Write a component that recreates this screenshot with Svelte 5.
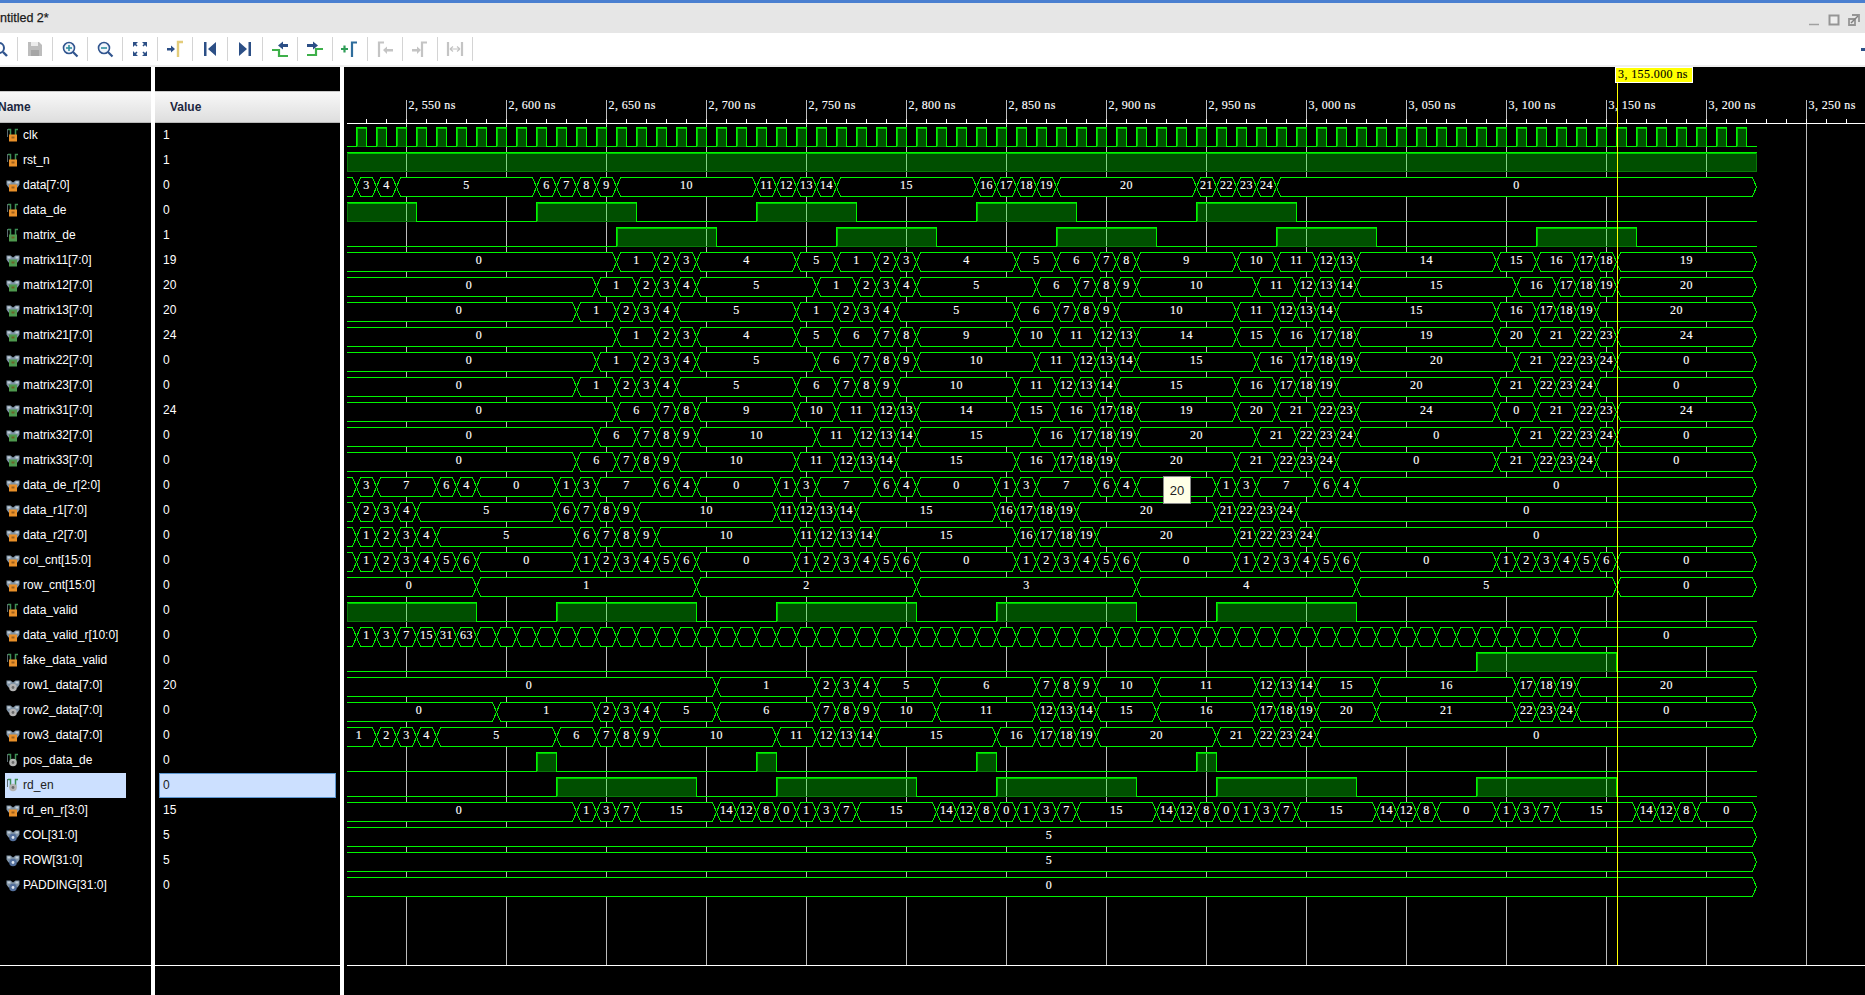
<script>
  // waveform geometry, all in page pixels (the svg viewBox starts at the panel's corner)
  const X = (k) => 356.5 + 20 * k;
  const rowTop = (i) => 127.5 + 25 * i;
  const rowBot = (i) => 146.5 + 25 * i;
  const END = 70;
  const LABEL_START = 341.4;

  const bus = (spec) => {
    const parts = spec.trim().split(/\s+/).map((p) => {
      const [k, v] = p.split(':');
      return { k: +k, v };
    });
    return parts.map((p, i) => ({
      x0: X(p.k),
      x1: X(i + 1 < parts.length ? parts[i + 1].k : END),
      v: p.v
    }));
  };

  const clkHigh = Array.from({ length: 70 }, (_, k) => [k, k + 0.5]);

  let validR = '-1: 0:1 1:3 2:7 3:15 4:31 5:63';
  for (let k = 6; k < 61; k++) validR += ` ${k}:`;
  validR += ' 61:0';

  const signals = [
    { name: 'clk', value: '1', icon: 'bit', badge: 'orange', high: clkHigh },
    { name: 'rst_n', value: '1', icon: 'bit', badge: 'orange', high: [[-1, 70]] },
    { name: 'data[7:0]', value: '0', icon: 'bus', badge: 'orange', bus: '-1: 0:3 1:4 2:5 9:6 10:7 11:8 12:9 13:10 20:11 21:12 22:13 23:14 24:15 31:16 32:17 33:18 34:19 35:20 42:21 43:22 44:23 45:24 46:0' },
    { name: 'data_de', value: '0', icon: 'bit', badge: 'orange', high: [[-1, 3], [9, 14], [20, 25], [31, 36], [42, 47]] },
    { name: 'matrix_de', value: '1', icon: 'bit', badge: 'green', high: [[13, 18], [24, 29], [35, 40], [46, 51], [59, 64]] },
    { name: 'matrix11[7:0]', value: '19', icon: 'bus', badge: 'green', bus: '-5:0 13:1 15:2 16:3 17:4 22:5 24:1 26:2 27:3 28:4 33:5 35:6 37:7 38:8 39:9 44:10 46:11 48:12 49:13 50:14 57:15 59:16 61:17 62:18 63:19' },
    { name: 'matrix12[7:0]', value: '20', icon: 'bus', badge: 'green', bus: '-5:0 12:1 14:2 15:3 16:4 17:5 23:1 25:2 26:3 27:4 28:5 34:6 36:7 37:8 38:9 39:10 45:11 47:12 48:13 49:14 50:15 58:16 60:17 61:18 62:19 63:20' },
    { name: 'matrix13[7:0]', value: '20', icon: 'bus', badge: 'green', bus: '-5:0 11:1 13:2 14:3 15:4 16:5 22:1 24:2 25:3 26:4 27:5 33:6 35:7 36:8 37:9 38:10 44:11 46:12 47:13 48:14 49:15 57:16 59:17 60:18 61:19 62:20' },
    { name: 'matrix21[7:0]', value: '24', icon: 'bus', badge: 'green', bus: '-5:0 13:1 15:2 16:3 17:4 22:5 24:6 26:7 27:8 28:9 33:10 35:11 37:12 38:13 39:14 44:15 46:16 48:17 49:18 50:19 57:20 59:21 61:22 62:23 63:24' },
    { name: 'matrix22[7:0]', value: '0', icon: 'bus', badge: 'green', bus: '-5:0 12:1 14:2 15:3 16:4 17:5 23:6 25:7 26:8 27:9 28:10 34:11 36:12 37:13 38:14 39:15 45:16 47:17 48:18 49:19 50:20 58:21 60:22 61:23 62:24 63:0' },
    { name: 'matrix23[7:0]', value: '0', icon: 'bus', badge: 'green', bus: '-5:0 11:1 13:2 14:3 15:4 16:5 22:6 24:7 25:8 26:9 27:10 33:11 35:12 36:13 37:14 38:15 44:16 46:17 47:18 48:19 49:20 57:21 59:22 60:23 61:24 62:0' },
    { name: 'matrix31[7:0]', value: '24', icon: 'bus', badge: 'green', bus: '-5:0 13:6 15:7 16:8 17:9 22:10 24:11 26:12 27:13 28:14 33:15 35:16 37:17 38:18 39:19 44:20 46:21 48:22 49:23 50:24 57:0 59:21 61:22 62:23 63:24' },
    { name: 'matrix32[7:0]', value: '0', icon: 'bus', badge: 'green', bus: '-5:0 12:6 14:7 15:8 16:9 17:10 23:11 25:12 26:13 27:14 28:15 34:16 36:17 37:18 38:19 39:20 45:21 47:22 48:23 49:24 50:0 58:21 60:22 61:23 62:24 63:0' },
    { name: 'matrix33[7:0]', value: '0', icon: 'bus', badge: 'green', bus: '-5:0 11:6 13:7 14:8 15:9 16:10 22:11 24:12 25:13 26:14 27:15 33:16 35:17 36:18 37:19 38:20 44:21 46:22 47:23 48:24 49:0 57:21 59:22 60:23 61:24 62:0' },
    { name: 'data_de_r[2:0]', value: '0', icon: 'bus', badge: 'orange', bus: '-1: 0:3 1:7 4:6 5:4 6:0 10:1 11:3 12:7 15:6 16:4 17:0 21:1 22:3 23:7 26:6 27:4 28:0 32:1 33:3 34:7 37:6 38:4 39:0 43:1 44:3 45:7 48:6 49:4 50:0' },
    { name: 'data_r1[7:0]', value: '0', icon: 'bus', badge: 'orange', bus: '-1: 0:2 1:3 2:4 3:5 10:6 11:7 12:8 13:9 14:10 21:11 22:12 23:13 24:14 25:15 32:16 33:17 34:18 35:19 36:20 43:21 44:22 45:23 46:24 47:0' },
    { name: 'data_r2[7:0]', value: '0', icon: 'bus', badge: 'orange', bus: '-1: 0:1 1:2 2:3 3:4 4:5 11:6 12:7 13:8 14:9 15:10 22:11 23:12 24:13 25:14 26:15 33:16 34:17 35:18 36:19 37:20 44:21 45:22 46:23 47:24 48:0' },
    { name: 'col_cnt[15:0]', value: '0', icon: 'bus', badge: 'orange', bus: '-1: 0:1 1:2 2:3 3:4 4:5 5:6 6:0 11:1 12:2 13:3 14:4 15:5 16:6 17:0 22:1 23:2 24:3 25:4 26:5 27:6 28:0 33:1 34:2 35:3 36:4 37:5 38:6 39:0 44:1 45:2 46:3 47:4 48:5 49:6 50:0 57:1 58:2 59:3 60:4 61:5 62:6 63:0' },
    { name: 'row_cnt[15:0]', value: '0', icon: 'bus', badge: 'orange', bus: '-5:0 6:1 17:2 28:3 39:4 50:5 63:0' },
    { name: 'data_valid', value: '0', icon: 'bit', badge: 'orange', high: [[-1, 6], [10, 17], [21, 28], [32, 39], [43, 50]] },
    { name: 'data_valid_r[10:0]', value: '0', icon: 'bus', badge: 'orange', bus: validR },
    { name: 'fake_data_valid', value: '0', icon: 'bit', badge: 'orange', high: [[56, 63]] },
    { name: 'row1_data[7:0]', value: '20', icon: 'bus', badge: 'gray', bus: '-5:0 18:1 23:2 24:3 25:4 26:5 29:6 34:7 35:8 36:9 37:10 40:11 45:12 46:13 47:14 48:15 51:16 58:17 59:18 60:19 61:20' },
    { name: 'row2_data[7:0]', value: '0', icon: 'bus', badge: 'gray', bus: '-5:0 7:1 12:2 13:3 14:4 15:5 18:6 23:7 24:8 25:9 26:10 29:11 34:12 35:13 36:14 37:15 40:16 45:17 46:18 47:19 48:20 51:21 58:22 59:23 60:24 61:0' },
    { name: 'row3_data[7:0]', value: '0', icon: 'bus', badge: 'orange', bus: '-5:1 1:2 2:3 3:4 4:5 10:6 12:7 13:8 14:9 15:10 21:11 23:12 24:13 25:14 26:15 32:16 34:17 35:18 36:19 37:20 43:21 45:22 46:23 47:24 48:0' },
    { name: 'pos_data_de', value: '0', icon: 'bit', badge: 'gray', high: [[9, 10], [20, 21], [31, 32], [42, 43]] },
    { name: 'rd_en', value: '0', icon: 'bit', badge: 'gray', selected: true, high: [[10, 17], [21, 28], [32, 39], [43, 50], [56, 63]] },
    { name: 'rd_en_r[3:0]', value: '15', icon: 'bus', badge: 'orange', bus: '-5:0 11:1 12:3 13:7 14:15 18:14 19:12 20:8 21:0 22:1 23:3 24:7 25:15 29:14 30:12 31:8 32:0 33:1 34:3 35:7 36:15 40:14 41:12 42:8 43:0 44:1 45:3 46:7 47:15 51:14 52:12 53:8 54:0 57:1 58:3 59:7 60:15 64:14 65:12 66:8 67:0' },
    { name: 'COL[31:0]', value: '5', icon: 'bus', badge: 'blue', bus: '-5:5' },
    { name: 'ROW[31:0]', value: '5', icon: 'bus', badge: 'blue', bus: '-5:5' },
    { name: 'PADDING[31:0]', value: '0', icon: 'bus', badge: 'blue', bus: '-5:0' }
  ];

  const badgeColors = { orange: '#e8902a', green: '#4f9a4f', gray: '#b4b4b4', blue: '#54709c' };

  const rows = signals.map((s, i) => {
    const top = rowTop(i);
    const bot = rowBot(i);
    const mid = (top + bot) / 2;
    if (s.bus) {
      const segs = bus(s.bus).map((seg) => ({
        v: seg.v,
        points: [
          [seg.x0 + 4, top], [seg.x1 - 4, top], [seg.x1, mid],
          [seg.x1 - 4, bot], [seg.x0 + 4, bot], [seg.x0, mid]
        ].join(' '),
        cx: (Math.max(seg.x0, LABEL_START) + seg.x1) / 2
      }));
      return { ...s, segs, baseline: top + 11 };
    }
    let d = `M 346.5 ${bot}`;
    let edge = '';
    let openEnd = false;
    for (const [a, b] of s.high) {
      if (a < 0) {
        d = `M 346.5 ${top}`;
        edge += `M 348 ${top + 1} L ${X(b) - 1} ${top + 1} `;
      } else {
        d += ` L ${X(a)} ${bot} L ${X(a)} ${top}`;
        edge += `M ${X(a) + 1} ${bot - 1} L ${X(a) + 1} ${top + 1} L ${X(b) - 1} ${top + 1} `;
      }
      d += ` L ${X(b)} ${top}`;
      if (b >= END) openEnd = true;
      else d += ` L ${X(b)} ${bot}`;
    }
    if (!openEnd) d += ` L ${X(END)} ${bot}`;
    const blocks = s.high.map(([a, b]) => {
      const x = Math.max(X(a), 347.5);
      return { x, w: X(b) - x, y: top, h: bot - top };
    });
    return { ...s, d, edge, blocks };
  });

  const majors = Array.from({ length: 15 }, (_, n) => {
    const t = 2550 + 50 * n;
    return { x: 406.5 + 100 * n, label: `${Math.floor(t / 1000)}, ${String(t % 1000).padStart(3, '0')} ns` };
  });
  const ticks = Array.from({ length: 76 }, (_, n) => 366.5 + 20 * n);

  const tools = ['search', 'save', 'zoomin', 'zoomout', 'fit', 'goto', 'first', 'last', 'prevedge', 'nextedge', 'addmark', 'prevmark', 'nextmark', 'swap'];
</script>

{#snippet sigIcon(kind, badge)}
  <svg class="sig-icon" viewBox="0 0 14 14" width="14" height="14">
    {#if kind === 'bit'}
      <path d="M2 1.500h2.500v8M12 1.500H9.500v8" fill="none" stroke="#3d8f55" stroke-width="1.500" />
      <path d="M1.500 1v8" stroke="#5a6a70" stroke-width="1" />
    {:else}
      <path d="M0.500 2.500h4l2.500 2 2.500-2h4v4l-2 3h-9l-2-3z" fill="#7f93a6" />
      <path d="M1.500 3.500h3v2h-3zM9.500 3.500h3v2h-3z" fill="#c4d0da" />
    {/if}
    {#if badge === 'orange' || badge === 'green'}
      <path d="M3 6.500h8v7H3z" fill={badgeColors[badge]} />
      <path d="M5.500 8.500h3v2h-3z" fill="#7a4a18" opacity="0.7" />
    {:else}
      <circle cx="7" cy="9.500" r="3.800" fill={badgeColors[badge]} />
      <circle cx="7" cy="9.500" r="1.400" fill={badge === 'blue' ? '#dfe7f2' : '#6a6a6a'} />
    {/if}
  </svg>
{/snippet}

{#snippet toolIcon(t)}
  <svg viewBox="0 0 18 18" width="18" height="18">
    {#if t === 'search'}
      <circle cx="8" cy="8" r="5" fill="none" stroke="#31558f" stroke-width="2" />
      <path d="M12 12l4 4" stroke="#31558f" stroke-width="2.400" />
    {:else if t === 'save'}
      <path d="M2 2h11l3 3v11H2z" fill="#bdbdbd" />
      <path d="M5 2h7v4H5z" fill="#ececec" />
      <path d="M5 10h8v6H5z" fill="#a6a6a6" />
    {:else if t === 'zoomin' || t === 'zoomout'}
      <circle cx="8" cy="8" r="5.500" fill="#f1f5fb" stroke="#31558f" stroke-width="1.600" />
      <path d="M12 12l4.500 4.500" stroke="#31558f" stroke-width="2.200" />
      <path d="M5 8h6" stroke="#2f8f9f" stroke-width="1.600" />
      {#if t === 'zoomin'}<path d="M8 5v6" stroke="#2f8f9f" stroke-width="1.600" />{/if}
    {:else if t === 'fit'}
      <path d="M2 2h5l-5 5zM16 2h-5l5 5zM2 16h5l-5-5zM16 16h-5l5-5z" fill="#2c4f86" />
      <path d="M3 3l3 3M15 3l-3 3M3 15l3-3M15 15l-3-3" stroke="#2c4f86" stroke-width="1.600" />
    {:else if t === 'goto'}
      <path d="M1 8h4V5.500l4 3.500-4 3.500V10.500H1z" fill="#2c4f86" />
      <path d="M12 17V2h5" fill="none" stroke="#e3cc7a" stroke-width="2.400" />
    {:else if t === 'first'}
      <path d="M3 2h2.500v14H3zM15 2v14L7 9z" fill="#2c4f86" />
    {:else if t === 'last'}
      <path d="M15 2h-2.500v14H15zM3 2v14l8-7z" fill="#2c4f86" />
    {:else if t === 'prevedge'}
      <path d="M1 10h7v6h9" fill="none" stroke="#3eb04a" stroke-width="2.200" />
      <path d="M7 5.500l5-4v2.500h5v3h-5v2.500z" fill="#2c4f86" />
    {:else if t === 'nextedge'}
      <path d="M1 15h9v-6h7" fill="none" stroke="#3eb04a" stroke-width="2.200" />
      <path d="M12 5.500l-5-4v2.500H1v3h6v2.500z" fill="#2c4f86" />
    {:else if t === 'addmark'}
      <path d="M0 9h7M3.500 5.500v7" stroke="#2f9d57" stroke-width="2.200" />
      <path d="M11 17V2.500h5" fill="none" stroke="#2f6d9c" stroke-width="2.200" />
    {:else if t === 'prevmark'}
      <path d="M3 17V2.500h5" fill="none" stroke="#c4c4c4" stroke-width="2.200" />
      <path d="M7 10l4-3.500V9h6v2.500h-6V14z" fill="#c4c4c4" />
    {:else if t === 'nextmark'}
      <path d="M11 17V2.500h5" fill="none" stroke="#c4c4c4" stroke-width="2.200" />
      <path d="M10 10L6 6.500V9H1v2.500h5V14z" fill="#c4c4c4" />
    {:else if t === 'swap'}
      <path d="M2 2v14M16 2v14" stroke="#c4c4c4" stroke-width="2.200" />
      <path d="M4 9h10M4 9l3-2.500M4 9l3 2.500M14 9l-3-2.500M14 9l-3 2.500" fill="none" stroke="#c4c4c4" stroke-width="1.200" />
    {/if}
  </svg>
{/snippet}

<div class="app">
  <div class="accent"></div>
  <div class="titlebar">
    <span class="title">Untitled 2*</span>
    <div class="win-btns">
      <svg viewBox="0 0 12 12" width="12" height="12"><path d="M1 10.500h10" stroke="#a0a0a0" stroke-width="1.500" /></svg>
      <svg viewBox="0 0 12 12" width="12" height="12"><path d="M1.500 1.500h9v9h-9z" fill="#eee" stroke="#959595" stroke-width="2" /></svg>
      <svg viewBox="0 0 12 12" width="12" height="12"><path d="M4 1h7v7M1 5h6v6H1z" fill="none" stroke="#959595" stroke-width="1.800" /><path d="M3 9l7-7" stroke="#808080" stroke-width="1.500" /></svg>
    </div>
  </div>
  <div class="toolbar">
    {#each tools as t}
      <div class="tool">{@render toolIcon(t)}</div>
    {/each}
    <div class="tool-end">
      <svg viewBox="0 0 6 18" width="6" height="18"><path d="M2 8h4v3H2z" fill="#2c4f86" /></svg>
    </div>
  </div>
  <div class="band"></div>

  <div class="panes">
    <div class="col names">
      <div class="col-head"><span class="name-head">Name</span></div>
      <div class="col-rows">
        {#each signals as s}
          <div class="row" class:selected={s.selected}>
            {@render sigIcon(s.icon, s.badge)}
            <span>{s.name}</span>
          </div>
        {/each}
      </div>
      <div class="col-foot"></div>
    </div>
    <div class="col values">
      <div class="col-head"><span class="value-head">Value</span></div>
      <div class="col-rows">
        {#each signals as s}
          <div class="row" class:selected={s.selected}><span>{s.value}</span></div>
        {/each}
      </div>
      <div class="col-foot"></div>
    </div>
    <div class="wave">
      <svg viewBox="344 67 1521 928" width="1521" height="928" shape-rendering="crispEdges">
        <defs>
          <clipPath id="plot"><rect x="347" y="67" width="1518" height="928" /></clipPath>
        </defs>

        {#each majors as m}
          <line x1={m.x} x2={m.x} y1="100" y2="965" class="grid" />
          <text x={m.x + 2} y="109" class="t-ruler">{m.label}</text>
        {/each}
        {#each ticks as x}
          <line x1={x} x2={x} y1="119" y2="123" class="tick" />
        {/each}
        <line x1="347" x2="1865" y1="123.500" y2="123.500" class="tick" />
        <line x1="347" x2="1865" y1="965.500" y2="965.500" class="tick" />

        <g clip-path="url(#plot)">
          {#each rows as r}
            {#if r.segs}
              {#each r.segs as seg}
                <polygon points={seg.points} class="bus" />
                {#if seg.v}
                  <text x={seg.cx} y={r.baseline} class="t-val">{seg.v}</text>
                {/if}
              {/each}
            {:else}
              {#each r.blocks as b}
                <rect x={b.x} y={b.y} width={b.w} height={b.h} class="hi" />
              {/each}
              <path d={r.edge} class="hi-edge" />
              <path d={r.d} class="bit" />
            {/if}
          {/each}
        </g>

        <line x1="1617.500" x2="1617.500" y1="83" y2="965" class="cursor" />
        <rect x="1615.500" y="67.500" width="77" height="15" class="cursor-box" />
        <text x="1618" y="78" class="t-cursor">3, 155.000 ns</text>
      </svg>
    </div>
  </div>

  <div class="tooltip">20</div>
</div>

<style>
  :global(body) {
    margin: 0;
    background: #fff;
  }

  .app {
    position: relative;
    width: 1865px;
    height: 995px;
    overflow: hidden;
    display: flex;
    flex-direction: column;
    font-family: "Liberation Sans", Arial, sans-serif;
  }

  .accent {
    height: 3px;
    background: #4a7fd0;
  }

  .titlebar {
    height: 30px;
    background: #e6e6e6;
    display: flex;
    align-items: center;
    justify-content: space-between;
  }

  .title {
    margin-left: -9px;
    font-size: 12.5px;
    font-weight: 400;
    color: #1a1a1a;
    -webkit-text-stroke: 0.25px #1a1a1a;
  }

  .win-btns {
    display: flex;
    gap: 8px;
    padding-right: 5px;
    margin-top: 4px;
  }

  .toolbar {
    height: 32px;
    background: #fff;
    display: flex;
    align-items: center;
  }

  .tool {
    width: 35px;
    height: 24px;
    flex: none;
    box-sizing: border-box;
    border-right: 1px solid #d4d4d4;
    display: flex;
    align-items: center;
    justify-content: center;
  }

  .tool:first-child {
    margin-left: -17px;
  }

  .tool-end {
    margin-left: auto;
    display: flex;
  }

  .band {
    height: 2px;
    background: #efefef;
  }

  .panes {
    flex: 1;
    display: flex;
    min-height: 0;
    background: #fff;
  }

  .col {
    display: flex;
    flex-direction: column;
    background: #000;
    padding-top: 24px;
    box-sizing: border-box;
    color: #fff;
    font-size: 12px;
  }

  .names {
    width: 151px;
    margin-right: 4px;
  }

  .values {
    width: 185px;
    margin-right: 4px;
  }

  .col-head {
    height: 32px;
    flex: none;
    box-sizing: border-box;
    background: linear-gradient(#f8f8f8, #dedede);
    border-top: 1px solid #c9c9c9;
    border-bottom: 1px solid #b8b8b8;
    color: #1c2740;
    font-weight: 700;
    display: flex;
    align-items: center;
  }

  .name-head {
    margin-left: -2px;
  }

  .value-head {
    margin-left: 15px;
  }

  .col-rows {
    flex: 1;
  }

  .col-foot {
    height: 30px;
    flex: none;
    box-sizing: border-box;
    border-top: 1px solid #fff;
  }

  .row {
    height: 25px;
    padding-bottom: 2px;
    display: flex;
    align-items: center;
    box-sizing: border-box;
  }

  .names .row {
    padding-left: 6px;
    gap: 3px;
  }

  .sig-icon {
    flex: none;
  }

  .values .row {
    padding-left: 8px;
  }

  .names .row.selected {
    margin-left: 5px;
    width: 121px;
    padding-left: 1px;
    background: #cce0ff;
    color: #222;
  }

  .values .row.selected {
    margin: 0 4px;
    padding-left: 3px;
    background: #cce0ff;
    border: 1px solid #5d97d1;
    color: #222;
  }

  .wave {
    flex: 1;
    background: #000;
    min-width: 0;
  }

  .wave svg {
    display: block;
  }

  .grid {
    stroke: #bcbcbc;
    stroke-width: 1;
  }

  .tick {
    stroke: #fff;
    stroke-width: 1;
  }

  .bus {
    fill: #000;
    stroke: #00f500;
    stroke-width: 1;
  }

  .bit {
    fill: none;
    stroke: #00f500;
    stroke-width: 1;
  }

  .hi {
    fill: rgba(0, 255, 0, 0.31);
    stroke: #087a08;
    stroke-width: 1;
  }

  .hi-edge {
    fill: none;
    stroke: #00c400;
    stroke-width: 1;
  }

  .cursor {
    stroke: #ffff00;
    stroke-width: 1;
  }

  .cursor-box {
    fill: #ffff00;
    stroke: #fff;
    stroke-width: 1;
  }

  text {
    font-family: "Liberation Serif", "Times New Roman", serif;
    font-size: 12px;
    letter-spacing: 0.4px;
  }

  .t-ruler {
    fill: #fff;
    stroke: #fff;
    stroke-width: 0.15;
  }

  .t-val {
    fill: #fff;
    stroke: #fff;
    stroke-width: 0.15;
    text-anchor: middle;
  }

  .t-cursor {
    fill: #000;
    stroke: #000;
    stroke-width: 0.1;
  }

  .tooltip {
    position: absolute;
    left: 1163px;
    top: 476px;
    width: 28px;
    height: 28px;
    box-sizing: border-box;
    background: #ffffe6;
    border: 1px solid #8a8a8a;
    display: flex;
    align-items: center;
    justify-content: center;
    font-size: 13px;
    color: #222;
  }
</style>
